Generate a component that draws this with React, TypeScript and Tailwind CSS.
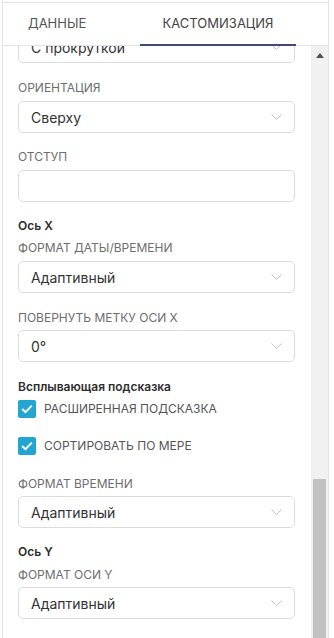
import React from "react";

const FONT = { fontFamily: "Inter, 'Noto Sans', sans-serif" };

function Chevron() {
  return (
    <svg width="11" height="7" viewBox="0 0 11 7" className="shrink-0">
      <polyline points="0.5,0.5 5.5,5.5 10.5,0.5" fill="none" stroke="#c4c4c4" strokeWidth="1" />
    </svg>
  );
}

function Select({ value }: { value: string }) {
  return (
    <div className="h-8 w-[277px] flex items-center justify-between rounded-[5px] border border-[#dcdcdc] bg-white pl-3 pr-3">
      <span className="text-[14px] text-[#333]">{value}</span>
      <Chevron />
    </div>
  );
}

function Label({ children }: { children: React.ReactNode }) {
  return <div className="text-[12px] leading-4 uppercase text-[#6e6e6e]">{children}</div>;
}

function Heading({ children }: { children: React.ReactNode }) {
  return <div className="text-[12px] leading-4 font-semibold text-[#2d2d2d]">{children}</div>;
}

function Check({ label, className }: { label: string; className?: string }) {
  return (
    <div className={"h-[26px] flex items-center gap-2 " + (className ?? "")}>
      <div className="w-[18px] h-[18px] rounded-[2px] bg-[#22a6cf] flex items-center justify-center">
        <svg width="12" height="10" viewBox="0 0 12 10">
          <polyline points="1.2,5 4.5,8.2 10.8,1.6" fill="none" stroke="#fff" strokeWidth="2" />
        </svg>
      </div>
      <span className="text-[12px] uppercase text-[#555]">{label}</span>
    </div>
  );
}

export default function App() {
  return (
    <div className="w-[334px] h-[638px] bg-white overflow-hidden" style={FONT}>
      <div className="ml-[2px] w-[327px] h-full border-x border-[#e3e3e3] flex flex-col">
        {/* tabs */}
        <div className="mt-[2px] h-[44px] shrink-0 border-t border-b border-[#e3e3e3] flex">
          <div className="w-[137px] pl-[25px] flex items-center text-[13px] text-[#555]">ДАННЫЕ</div>
          <div className="w-[156px] flex items-center justify-center text-[13px] text-[#444] border-b-2 border-[#3e4a78] mb-[-1px]">
            КАСТОМИЗАЦИЯ
          </div>
        </div>

        <div className="flex flex-1 min-h-0">
          {/* content, scrolled down a bit */}
          <div className="w-[308px] overflow-hidden pl-[15px]">
            <div className="mt-[-15px]">
              <Select value="С прокруткой" />

              <div className="mt-[17px]">
                <Label>Ориентация</Label>
                <div className="mt-[5px]"><Select value="Сверху" /></div>
              </div>

              <div className="mt-4">
                <Label>Отступ</Label>
                <div className="mt-[5px] h-8 w-[277px] rounded-[5px] border border-[#dcdcdc]" />
              </div>

              <div className="mt-4">
                <Heading>Ось X</Heading>
                <div className="mt-[6px]"><Label>Формат даты/времени</Label></div>
                <div className="mt-[5px]"><Select value="Адаптивный" /></div>
              </div>

              <div className="mt-[17px]">
                <Label>Повернуть метку оси X</Label>
                <div className="mt-1"><Select value="0°" /></div>
              </div>

              <div className="mt-[17px]">
                <Heading>Всплывающая подсказка</Heading>
                <Check label="Расширенная подсказка" className="mt-[1px]" />
                <Check label="Сортировать по мере" className="mt-[11px]" />
              </div>

              <div className="mt-[17px]">
                <Label>Формат времени</Label>
                <div className="mt-1"><Select value="Адаптивный" /></div>
              </div>

              <div className="mt-4">
                <Heading>Ось Y</Heading>
                <div className="mt-[7px]"><Label>Формат оси Y</Label></div>
                <div className="mt-1"><Select value="Адаптивный" /></div>
              </div>
            </div>
          </div>

          {/* scrollbar */}
          <div className="w-[17px] bg-[#f1f1f1] flex flex-col items-center">
            <div className="mt-[7px] w-0 h-0 border-x-[4px] border-x-transparent border-b-[5px] border-b-[#505050]" />
            <div className="mt-auto w-[13px] h-[159px] bg-[#c1c1c1]" />
          </div>
        </div>
      </div>
    </div>
  );
}
